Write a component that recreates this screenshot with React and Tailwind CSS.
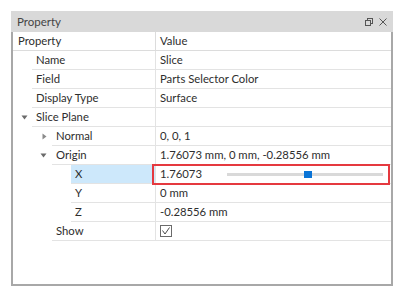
import React from "react";

const font = { fontFamily: 'Lato, "Noto Sans", sans-serif' };

function Down() {
  return (
    <svg width="7" height="5" viewBox="0 0 7 5" className="block">
      <path d="M0.5 0.5 L6.5 0.5 L3.5 4.5 Z" fill="#6b6b6b" />
    </svg>
  );
}
function Right() {
  return (
    <svg width="5" height="7" viewBox="0 0 5 7" className="block">
      <path d="M0.5 0.5 L4.5 3.5 L0.5 6.5 Z" fill="#8a8a8a" />
    </svg>
  );
}

function Row({ indent, expander, expPad, label, value, selected, children }) {
  return (
    <div className="flex h-[19px]">
      <div className="relative shrink-0" style={{ width: indent }}>
        {expander && (
          <div className="absolute top-0 h-full flex items-center" style={{ left: expPad }}>
            {expander === "down" ? <Down /> : <Right />}
          </div>
        )}
      </div>
      <div className="flex flex-1 border-b border-[#e3e3e3]">
        <div
          className={`shrink-0 flex items-center pl-[4px] border-r border-[#e3e3e3] ${selected ? "bg-[#cde8fb]" : ""}`}
          style={{ width: 143 - indent }}
        >
          {label}
        </div>
        <div className="relative flex-1 flex items-center pl-[4px]">
          {value}
          {children}
        </div>
      </div>
    </div>
  );
}

export default function App() {
  return (
    <div className="w-[404px] h-[300px] bg-white text-[11.3px] text-[#2e2e2e] pt-[11px] pl-[11px]" style={font}>
      <div className="w-[382px]">
        <div className="h-[21px] bg-[#d9d9d9] flex items-center justify-between pl-[6px] pr-[6px] text-[#444] text-[11.5px]">
          <span>Property</span>
          <div className="flex items-center gap-[6px]">
            <svg width="8" height="8" viewBox="0 0 8 8">
              <rect x="2.5" y="0.5" width="5" height="5" fill="none" stroke="#555" />
              <rect x="0.5" y="2.5" width="5" height="5" fill="#d9d9d9" stroke="#555" />
            </svg>
            <svg width="8" height="8" viewBox="0 0 8 8">
              <path d="M0.5 0.5 L7.5 7.5 M7.5 0.5 L0.5 7.5" stroke="#555" strokeWidth="1" />
            </svg>
          </div>
        </div>
        <div className="h-[254px] border-x-2 border-b-2 border-[#a8a8a8] bg-white">
          <div className="flex h-[19px] border-b border-[#dcdcdc]">
            <div className="w-[143px] shrink-0 border-r border-[#dcdcdc] flex items-center pl-[5px]">Property</div>
            <div className="flex-1 flex items-center pl-[4px]">Value</div>
          </div>
          <Row indent={19} label="Name" value="Slice" />
          <Row indent={19} label="Field" value="Parts Selector Color" />
          <Row indent={19} label="Display Type" value="Surface" />
          <Row indent={19} expander="down" expPad={8} label="Slice Plane" value="" />
          <Row indent={39} expander="right" expPad={29} label="Normal" value="0, 0, 1" />
          <Row indent={39} expander="down" expPad={27} label="Origin" value="1.76073 mm, 0 mm, -0.28556 mm" />
          <Row indent={58} label="X" value="1.76073" selected>
            <div className="absolute left-[71px] right-[8px] top-0 h-full flex items-center">
              <div className="relative w-full h-[3px] bg-[#d9d9d9]">
                <div className="absolute left-[77px] top-[-2px] w-[8px] h-[7px] bg-[#0a74d6]" />
              </div>
            </div>
            <div className="absolute left-[-4px] right-[1px] top-[-1px] bottom-[-2px] border-2 border-[#e5393f]" />
          </Row>
          <Row indent={58} label="Y" value="0 mm" />
          <Row indent={58} label="Z" value="-0.28556 mm" />
          <Row
            indent={39}
            label="Show"
            value={
              <svg width="12" height="12" viewBox="0 0 12 12">
                <rect x="0.5" y="0.5" width="11" height="11" fill="white" stroke="#6a6a6a" />
                <path d="M2.5 5.5 L5 9 L9.5 2.5" fill="none" stroke="#4a4a4a" strokeWidth="1" />
              </svg>
            }
          />
        </div>
      </div>
    </div>
  );
}
